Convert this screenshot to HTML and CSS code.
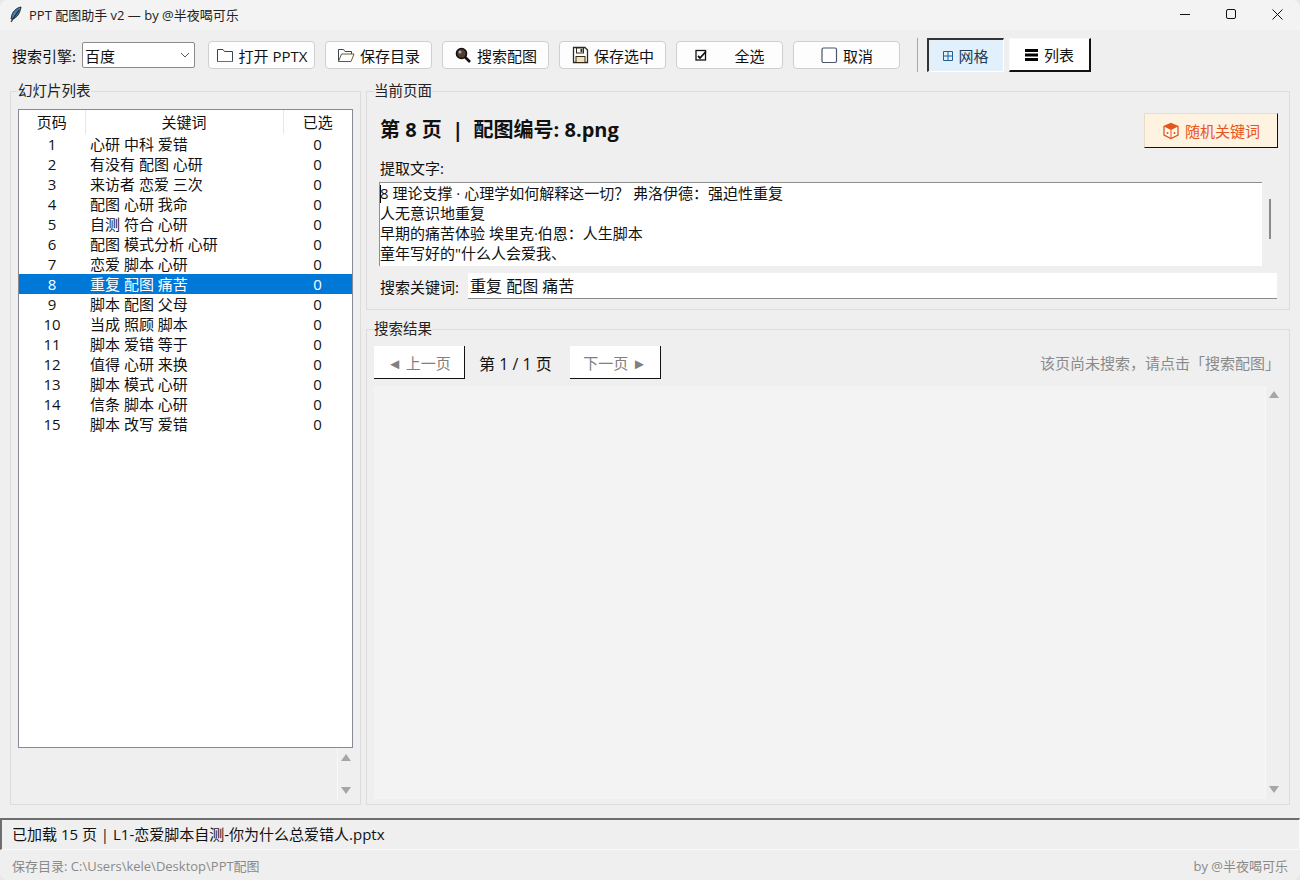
FILE: index.html
```html
<!DOCTYPE html>
<html lang="zh-CN">
<head>
    <meta charset="UTF-8">
    <meta name="viewport" content="width=device-width, initial-scale=1.0">
    <title>PPT 配图助手 v2</title>
    <link rel="stylesheet" href="styles.css">
</head>
<body>
    <div class="window">
        <!-- Title bar -->
        <div class="titlebar">
            <svg class="app-icon" width="16" height="18" viewBox="0 0 16 18">
                <path d="M13 1C8 2 4 6 3.5 11L3 13L4.500 13C9 12 12 7 13 1Z" fill="#4a7fa8" stroke="#1c2a38" stroke-width="1"/>
                <path d="M11 4L3 16" stroke="#1c2a38" stroke-width="1.200" fill="none"/>
            </svg>
            <span class="app-title">PPT 配图助手 v2 — by @半夜喝可乐</span>
            <div class="win-controls">
                <svg width="46" height="30" viewBox="0 0 46 30"><path d="M18 14.500H28" stroke="#111" fill="none"/></svg>
                <svg width="46" height="30" viewBox="0 0 46 30"><rect x="18.500" y="9.500" width="9" height="9" rx="1.500" stroke="#111" fill="none"/></svg>
                <svg width="46" height="30" viewBox="0 0 46 30"><path d="M18.500 9.500L28.500 19.500M28.500 9.500L18.500 19.500" stroke="#111" fill="none"/></svg>
            </div>
        </div>

        <!-- Toolbar -->
        <div class="toolbar">
            <label class="engine-label">搜索引擎:</label>
            <div class="combo">
                <span>百度</span>
                <svg width="10" height="6" viewBox="0 0 10 6"><path d="M1 1L5 5L9 1" stroke="#555" fill="none"/></svg>
            </div>
            <div class="tool-buttons">
                <button class="tool-btn">
                    <svg width="18" height="18" viewBox="0 0 18 18">
                        <path d="M1.500 15.500V3.500H7L8.500 5.500H16.500V15.500Z" fill="#fff" stroke="#3a4450"/>
                        <path d="M1.500 15.500H16.500" stroke="#2f7fc4"/>
                    </svg>
                    打开 PPTX
                </button>
                <button class="tool-btn">
                    <svg width="18" height="18" viewBox="0 0 18 18">
                        <path d="M1.500 15.500V3.500H6.500L8 5.500H14.500V8" fill="#fff" stroke="#3a4450"/>
                        <path d="M1.500 15.500L4.500 8H17L14 15.500Z" fill="#fff" stroke="#6b5a2e"/>
                    </svg>
                    保存目录
                </button>
                <button class="tool-btn">
                    <svg width="18" height="18" viewBox="0 0 18 18">
                        <circle cx="7.500" cy="7.500" r="5" fill="#5b3a28" stroke="#111" stroke-width="1.600"/>
                        <circle cx="6" cy="6" r="1.500" fill="#8fb4d8"/>
                        <path d="M11 11L16 16" stroke="#111" stroke-width="2.600"/>
                    </svg>
                    搜索配图
                </button>
                <button class="tool-btn">
                    <svg width="18" height="18" viewBox="0 0 18 18">
                        <path d="M2.500 1.500H14L16.500 4V16.500H2.500Z" fill="#fff" stroke="#33291c" stroke-width="1.300"/>
                        <rect x="5.500" y="2" width="7" height="5" fill="#fff" stroke="#33291c"/>
                        <rect x="9.500" y="3" width="2" height="3" fill="#33291c"/>
                        <rect x="5" y="10.500" width="9" height="6" fill="#f3e3b8" stroke="#33291c"/>
                    </svg>
                    保存选中
                </button>
                <button class="tool-btn wide-gap">
                    <svg width="14" height="14" viewBox="0 0 14 14">
                        <rect x="2" y="2.500" width="9.500" height="9.500" fill="#fff" stroke="#111" stroke-width="1.300"/>
                        <path d="M4 8L6 10L12 3.500" stroke="#111" stroke-width="1.800" fill="none"/>
                    </svg>
                    <span>全选</span>
                </button>
                <button class="tool-btn">
                    <svg width="18" height="18" viewBox="0 0 18 18"><rect x="2" y="2" width="14.500" height="14.500" rx="1.500" fill="#fff" stroke="#4a5668" stroke-width="1.200"/></svg>
                    取消
                </button>
            </div>
            <div class="tool-sep"></div>
            <div class="view-switch">
                <button class="view-btn active">
                    <svg width="10" height="10" viewBox="0 0 10 10"><path d="M0.500 0.500H9.500V9.500H0.500ZM5 0.500V9.500M0.500 5H9.500" stroke="#1f5f99" fill="none"/></svg>
                    网格
                </button>
                <button class="view-btn">
                    <svg width="14" height="12" viewBox="0 0 14 12"><path d="M0 0H13V3H0ZM0 4.500H13V7.500H0ZM0 9H13V12H0Z" fill="#000"/></svg>
                    列表
                </button>
            </div>
        </div>

        <!-- Main area -->
        <div class="main">
            <fieldset class="panel slides-panel">
                <legend>幻灯片列表</legend>
                <div class="tree">
                    <table class="slides">
                        <thead>
                            <tr><th class="col-page">页码</th><th class="col-words">关键词</th><th class="col-count">已选</th></tr>
                        </thead>
                        <tbody>
                            <tr><td>1</td><td>心研 中科 爱错</td><td>0</td></tr>
                            <tr><td>2</td><td>有没有 配图 心研</td><td>0</td></tr>
                            <tr><td>3</td><td>来访者 恋爱 三次</td><td>0</td></tr>
                            <tr><td>4</td><td>配图 心研 我命</td><td>0</td></tr>
                            <tr><td>5</td><td>自测 符合 心研</td><td>0</td></tr>
                            <tr><td>6</td><td>配图 模式分析 心研</td><td>0</td></tr>
                            <tr><td>7</td><td>恋爱 脚本 心研</td><td>0</td></tr>
                            <tr class="selected"><td>8</td><td>重复 配图 痛苦</td><td>0</td></tr>
                            <tr><td>9</td><td>脚本 配图 父母</td><td>0</td></tr>
                            <tr><td>10</td><td>当成 照顾 脚本</td><td>0</td></tr>
                            <tr><td>11</td><td>脚本 爱错 等于</td><td>0</td></tr>
                            <tr><td>12</td><td>值得 心研 来换</td><td>0</td></tr>
                            <tr><td>13</td><td>脚本 模式 心研</td><td>0</td></tr>
                            <tr><td>14</td><td>信条 脚本 心研</td><td>0</td></tr>
                            <tr><td>15</td><td>脚本 改写 爱错</td><td>0</td></tr>
                        </tbody>
                    </table>
                </div>
                <div class="tree-scroll">
                    <div class="scroll-track">
                        <span class="arrow-up"></span>
                        <span class="arrow-down"></span>
                    </div>
                </div>
            </fieldset>

            <div class="right-col">
                <fieldset class="panel page-panel">
                    <legend>当前页面</legend>
                    <div class="page-head">
                        <h2 class="page-title">第 8 页 &nbsp;|&nbsp; 配图编号: 8.png</h2>
                        <button class="random-btn">
                            <svg width="18" height="18" viewBox="0 0 18 18">
                                <path d="M9 1.500L16 4.500V13L9 16.500L2 13V4.500Z" fill="#fff6e8" stroke="#e0561c" stroke-width="1.300"/>
                                <path d="M2 4.500L9 8L16 4.500L9 1.500Z" fill="#e0561c"/>
                                <path d="M9 8V16.500" stroke="#e0561c"/>
                                <circle cx="5.500" cy="11" r="1" fill="#e0561c"/>
                                <circle cx="12.500" cy="11" r="1" fill="#e0561c"/>
                            </svg>
                            随机关键词
                        </button>
                    </div>
                    <div class="text-label">提取文字:</div>
                    <div class="text-row">
                        <div class="text-box">
                            <span class="caret"></span>
                            <div>8 理论支撑 · 心理学如何解释这一切？ 弗洛伊德：强迫性重复</div>
                            <div>人无意识地重复</div>
                            <div>早期的痛苦体验 埃里克·伯恩：人生脚本</div>
                            <div>童年写好的"什么人会爱我、</div>
                        </div>
                        <div class="text-scroll"><div class="text-thumb"></div></div>
                    </div>
                    <div class="keyword-row">
                        <label class="keyword-label">搜索关键词:</label>
                        <div class="keyword-input">重复 配图 痛苦</div>
                    </div>
                </fieldset>

                <fieldset class="panel result-panel">
                    <legend>搜索结果</legend>
                    <div class="pager">
                        <button class="page-btn">◄ 上一页</button>
                        <span class="page-num">第 1 / 1 页</span>
                        <button class="page-btn">下一页 ►</button>
                        <span class="pager-hint">该页尚未搜索，请点击「搜索配图」</span>
                    </div>
                    <div class="result-body">
                        <div class="result-canvas"></div>
                        <div class="scroll-track result-scroll">
                            <span class="arrow-up"></span>
                            <span class="arrow-down"></span>
                        </div>
                    </div>
                </fieldset>
            </div>
        </div>

        <!-- Status -->
        <div class="status">已加载 15 页 | L1-恋爱脚本自测-你为什么总爱错人.pptx</div>
        <div class="footer">
            <span>保存目录: C:\Users\kele\Desktop\PPT配图</span>
            <span>by @半夜喝可乐</span>
        </div>
    </div>
</body>
</html>
```

FILE: styles.css
```css
* {
    margin: 0;
    padding: 0;
    box-sizing: border-box;
    font-family: 'Open Sans', 'Noto Sans CJK SC', sans-serif;
}

body {
    background-color: #e8e8e8;
    width: 1300px;
    height: 880px;
    overflow: hidden;
}

button {
    font-size: 15px;
    color: #111;
}

.window {
    width: 1300px;
    height: 880px;
    background-color: #efefef;
    border-radius: 8px;
    overflow: hidden;
    display: flex;
    flex-direction: column;
}

/* Title bar */
.titlebar {
    height: 30px;
    background-color: #f3f3f3;
    display: flex;
    align-items: center;
    padding-left: 8px;
}

.app-icon {
    margin-right: 5px;
}

.app-title {
    font-size: 13px;
    line-height: 30px;
    color: #222;
}

.win-controls {
    margin-left: auto;
    display: flex;
    height: 30px;
}

/* Toolbar */
.toolbar {
    height: 51px;
    padding: 0 0 1px 12px;
    display: flex;
    align-items: center;
}

.engine-label {
    font-size: 15px;
    width: 70px;
    color: #111;
}

.combo {
    width: 113px;
    height: 26px;
    background-color: #fff;
    border: 1px solid #8b8b8b;
    border-radius: 2px;
    display: flex;
    align-items: center;
    justify-content: space-between;
    padding: 0 4px 0 2px;
    font-size: 15px;
    color: #111;
}

.tool-buttons {
    display: flex;
    gap: 10px;
    margin-left: 13px;
}

.tool-btn {
    width: 107px;
    height: 28px;
    background-color: #fdfdfd;
    border: 1px solid #cfcfcf;
    border-radius: 4px;
    display: flex;
    align-items: center;
    justify-content: center;
    gap: 5px;
}

.wide-gap {
    gap: 26px;
}

.tool-sep {
    width: 1px;
    height: 34px;
    background-color: #a8a8a8;
    margin-left: 17px;
}

.view-switch {
    display: flex;
    gap: 5px;
    margin-left: 9px;
}

.view-btn {
    height: 34px;
    width: 82px;
    background-color: #fff;
    border: none;
    border-top: 1px solid #f8f8f8;
    border-left: 1px solid #f8f8f8;
    border-right: 2px solid #111;
    border-bottom: 2px solid #111;
    display: flex;
    align-items: center;
    justify-content: center;
    gap: 5px;
}

.view-btn.active {
    width: 77px;
    background-color: #e1f0fb;
    border-top: 2px solid #333;
    border-left: 2px solid #333;
    border-right: 1px solid #fff;
    border-bottom: 1px solid #fff;
    color: #1c3c58;
}

/* Panels */
.main {
    height: 724px;
    padding: 0 10px;
    display: flex;
    gap: 5px;
}

.panel {
    border: 1px solid #dcdcdc;
    min-width: 0;
}

.panel legend {
    font-size: 14.500px;
    line-height: 20px;
    color: #222;
}

.slides-panel {
    width: 351px;
    height: 724px;
    padding: 8px 7px 0;
}

.right-col {
    width: 924px;
    display: flex;
    flex-direction: column;
    gap: 9px;
}

.page-panel {
    height: 229px;
    padding: 0 11px 0 13px;
}

.page-panel legend {
    margin-left: -6px;
}

.result-panel {
    height: 486px;
    padding: 7px 0 0 7px;
}

/* Slide list */
.tree {
    height: 639px;
    width: 335px;
    background-color: #fff;
    border: 1px solid #868b94;
}

.slides {
    width: 333px;
    border-collapse: collapse;
    table-layout: fixed;
    font-size: 15px;
    color: #111;
}

.slides th {
    height: 24px;
    font-weight: normal;
    border-right: 1px solid #e6e6e6;
    line-height: 24px;
}

.slides th:last-child {
    border-right: none;
}

.col-page {
    width: 66px;
}

.col-count {
    width: 69px;
}

.slides td {
    height: 20px;
    line-height: 20px;
    padding: 0;
    text-align: center;
}

.slides td:nth-child(2) {
    text-align: left;
    padding-left: 5px;
}

.slides tr.selected {
    background-color: #0078d7;
    color: #fff;
}

.tree-scroll {
    display: flex;
    justify-content: flex-end;
    width: 335px;
}

.scroll-track {
    width: 16px;
    height: 52px;
    border-left: 1px solid #f8f8f8;
    display: flex;
    flex-direction: column;
    justify-content: space-between;
    align-items: center;
    padding: 6px 0;
}

.arrow-up {
    width: 0;
    height: 0;
    border-left: 5px solid transparent;
    border-right: 5px solid transparent;
    border-bottom: 7px solid #a6a6a6;
}

.arrow-down {
    width: 0;
    height: 0;
    border-left: 5px solid transparent;
    border-right: 5px solid transparent;
    border-top: 7px solid #a6a6a6;
}

/* Current page */
.page-head {
    height: 49px;
    display: flex;
    align-items: flex-start;
    justify-content: space-between;
}

.page-title {
    font-size: 20px;
    line-height: 24px;
    padding-top: 17px;
    font-weight: bold;
    color: #111;
    box-sizing: content-box;
}

.random-btn {
    width: 134px;
    height: 35px;
    margin-top: 12px;
    background-color: #fef2e0;
    color: #e8551c;
    border: none;
    border-top: 1px solid #eadcca;
    border-left: 1px solid #eadcca;
    border-right: 1px solid #111;
    border-bottom: 1px solid #111;
    display: flex;
    align-items: center;
    justify-content: center;
    gap: 5px;
}

.text-label {
    font-size: 15px;
    line-height: 20px;
    margin-top: 8px;
    color: #111;
}

.text-row {
    display: flex;
    margin-top: 4px;
    margin-left: -1px;
}

.text-box {
    width: 883px;
    height: 84px;
    background-color: #fff;
    border-top: 1px solid #8f8f8f;
    border-left: 1px solid #8f8f8f;
    font-size: 15px;
    line-height: 20px;
    color: #111;
    overflow: hidden;
    position: relative;
}

.caret {
    position: absolute;
    left: 0;
    top: 2px;
    width: 1px;
    height: 18px;
    background-color: #000;
}

.text-scroll {
    margin-left: 7px;
    padding-top: 17px;
}

.text-thumb {
    width: 2px;
    height: 40px;
    background-color: #8a8a8a;
}

.keyword-row {
    display: flex;
    align-items: center;
    margin-top: 7px;
}

.keyword-label {
    font-size: 15px;
    width: 88px;
    color: #111;
}

.keyword-input {
    width: 809px;
    height: 26px;
    background-color: #fff;
    border-bottom: 1px solid #8a8a8a;
    font-size: 16px;
    line-height: 26px;
    padding-left: 2px;
    color: #111;
}

/* Search results */
.pager {
    display: flex;
    align-items: center;
    height: 33px;
    padding-right: 9px;
}

.page-btn {
    width: 91px;
    height: 33px;
    background-color: #fff;
    color: #808080;
    border: none;
    border-right: 1px solid #111;
    border-bottom: 1px solid #111;
}

.page-num {
    width: 105px;
    padding-left: 14px;
    font-size: 16px;
    color: #111;
}

.pager-hint {
    margin-left: auto;
    font-size: 15px;
    color: #8a8a8a;
}

.result-body {
    display: flex;
    margin-top: 7px;
    height: 413px;
}

.result-canvas {
    width: 891px;
    background-color: #f3f3f3;
}

.result-scroll {
    width: 17px;
    height: 413px;
    border-left: 1px solid #f8f8f8;
    padding: 5px 0 6px;
}

/* Status */
.status {
    height: 32px;
    margin-top: 13px;
    border-top: 2px solid #6e6e6e;
    border-left: 2px solid #6e6e6e;
    border-bottom: 1px solid #fafafa;
    border-right: 1px solid #fafafa;
    font-size: 15px;
    line-height: 29px;
    padding-left: 10px;
    color: #111;
}

.footer {
    flex: 1;
    display: flex;
    justify-content: space-between;
    align-items: center;
    padding: 0 12px;
    font-size: 13px;
    color: #8a8a8a;
}
```
